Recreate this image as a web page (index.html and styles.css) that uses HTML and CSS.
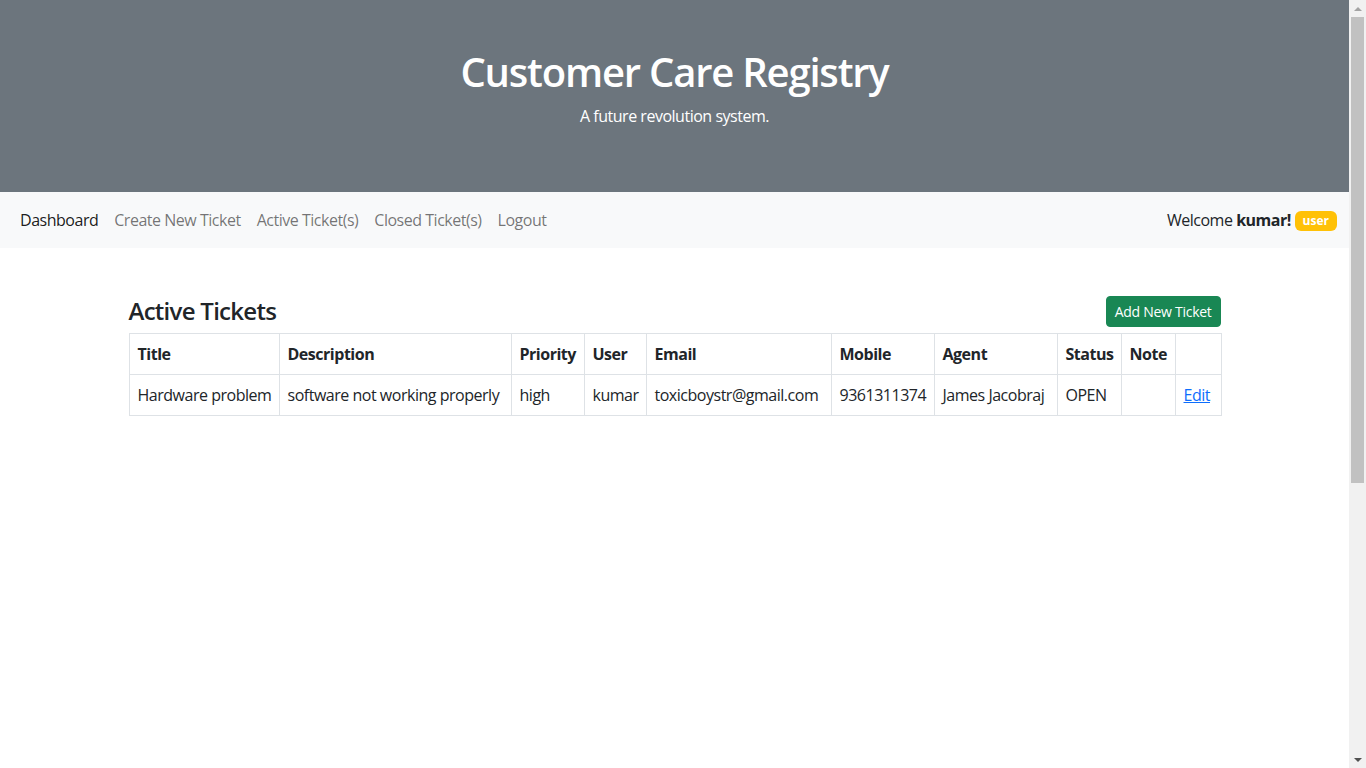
FILE: index.html
```html
<!DOCTYPE html>
<html lang="en">
<head>
<meta charset="utf-8">
<title>Customer Care Registry</title>
<link rel="stylesheet" href="styles.css">
</head>
<body>
<div class="page">
  <header class="hero">
    <h1 class="hero-title">Customer Care Registry</h1>
    <p class="hero-sub">A future revolution system.</p>
  </header>
  <nav class="navbar">
    <ul class="nav-links">
      <li><a class="nav-link active" href="#">Dashboard</a></li>
      <li><a class="nav-link" href="#">Create New Ticket</a></li>
      <li><a class="nav-link" href="#">Active Ticket(s)</a></li>
      <li><a class="nav-link" href="#">Closed Ticket(s)</a></li>
      <li><a class="nav-link" href="#">Logout</a></li>
    </ul>
    <div class="welcome">Welcome <b>kumar!</b> <span class="badge">user</span></div>
  </nav>
  <main class="content">
    <div class="content-head">
      <h4 class="content-title">Active Tickets</h4>
      <a class="btn-add" href="#">Add New Ticket</a>
    </div>
    <table class="tickets">
      <colgroup>
        <col class="c-title"><col class="c-desc"><col class="c-priority"><col class="c-user"><col class="c-email"><col class="c-mobile"><col class="c-agent"><col class="c-status"><col class="c-note"><col class="c-action">
      </colgroup>
      <thead>
        <tr><th>Title</th><th>Description</th><th>Priority</th><th>User</th><th>Email</th><th>Mobile</th><th>Agent</th><th>Status</th><th>Note</th><th></th></tr>
      </thead>
      <tbody>
        <tr><td>Hardware problem</td><td>software not working properly</td><td>high</td><td>kumar</td><td>toxicboystr@gmail.com</td><td>9361311374</td><td>James Jacobraj</td><td>OPEN</td><td></td><td><a class="edit-link" href="#">Edit</a></td></tr>
      </tbody>
    </table>
  </main>
</div>
<div class="scrollbar" aria-hidden="true">
  <div class="sb-btn"><span class="sb-arrow-up"></span></div>
  <div class="sb-track"><div class="sb-thumb"></div></div>
  <div class="sb-btn"><span class="sb-arrow-down"></span></div>
</div>
</body>
</html>
```
FILE: styles.css
```css
* { box-sizing: border-box; }
html, body { margin: 0; padding: 0; }
body {
  font-family: "Open Sans", "Noto Sans", sans-serif;
  font-size: 16px;
  line-height: 1.5;
  color: #212529;
  background: #fff;
  letter-spacing: -0.03em;
  display: flex;
  align-items: flex-start;
}
.page { flex: 1; min-width: 0; min-height: 1200px; }

/* classic scrollbar column */
.scrollbar {
  flex: 0 0 17px;
  width: 17px;
  height: 100vh;
  position: sticky;
  top: 0;
  background: #f1f1f1;
  display: flex;
  flex-direction: column;
}
.sb-btn {
  height: 17px;
  flex: 0 0 17px;
  display: flex;
  align-items: center;
  justify-content: center;
}
.sb-arrow-up {
  width: 0; height: 0;
  border-left: 4px solid transparent;
  border-right: 4px solid transparent;
  border-bottom: 4px solid #a3a3a3;
}
.sb-arrow-down {
  width: 0; height: 0;
  border-left: 4px solid transparent;
  border-right: 4px solid transparent;
  border-top: 4px solid #505050;
}
.sb-track { flex: 1; }
.sb-thumb {
  height: 466px;
  margin: 0 2px;
  background: #c1c1c1;
}

.hero {
  background: #6c757d;
  color: #fff;
  text-align: center;
  padding: 48px 12px;
}
.hero-title {
  margin: 0 0 8px;
  font-size: 40px;
  font-weight: 600;
  line-height: 1.2;
  letter-spacing: -0.03em;
}
.hero-sub { margin: 0 0 16px; }
.navbar {
  background: #f8f9fa;
  display: flex;
  justify-content: space-between;
  align-items: center;
  padding: 8px 12px;
}
.nav-links { list-style: none; margin: 0; padding: 0; display: flex; }
.nav-link {
  display: block;
  padding: 8px;
  color: rgba(0,0,0,.55);
  text-decoration: none;
}
.nav-link.active { color: rgba(0,0,0,.9); }
.welcome { color: #212529; }
.welcome b { font-weight: 700; }
.badge {
  display: inline-block;
  background: #ffc107;
  color: #fff;
  font-size: 12px;
  font-weight: 700;
  line-height: 1;
  padding: 4px 8px;
  border-radius: 6px;
  vertical-align: 1px;
  letter-spacing: 0;
}
.content {
  max-width: 1092px;
  margin: 48px auto 0;
}
.content-head {
  display: flex;
  justify-content: space-between;
  align-items: center;
  margin-bottom: 6px;
}
.content-title {
  margin: 0;
  font-size: 24px;
  font-weight: 600;
  line-height: 1.2;
  letter-spacing: -0.03em;
}
.btn-add {
  display: inline-block;
  background: #198754;
  border: 1px solid #198754;
  color: #fff;
  font-size: 14px;
  line-height: 21px;
  padding: 4px 8px;
  border-radius: 4px;
  text-decoration: none;
  letter-spacing: -0.02em;
}
.tickets {
  width: 100%;
  border-collapse: collapse;
  table-layout: fixed;
}
.tickets th, .tickets td {
  border: 1px solid #dee2e6;
  padding: 8px;
  text-align: left;
  vertical-align: top;
  white-space: nowrap;
}
.tickets th { font-weight: 700; }
.c-title { width: 150px; }
.c-desc { width: 232px; }
.c-priority { width: 73px; }
.c-user { width: 62px; }
.c-email { width: 185px; }
.c-mobile { width: 103px; }
.c-agent { width: 123px; }
.c-status { width: 64px; }
.c-note { width: 54px; }
.c-action { width: 46px; }
.edit-link { color: #0d6efd; text-decoration: underline; }
```
